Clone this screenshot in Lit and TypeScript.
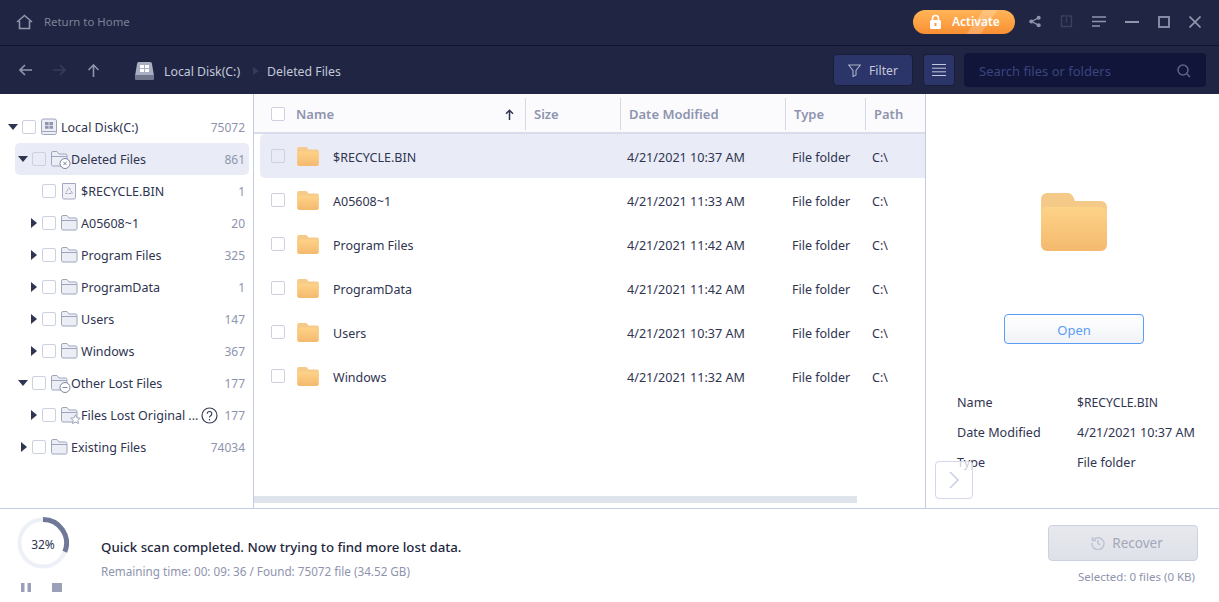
import { LitElement, html, css, svg } from "lit";
import { customElement } from "lit/decorators.js";

type TreeRow = {
  name: string;
  count: string;
  depth: number;
  arrow?: "down" | "right";
  icon: "disk" | "folder" | "bin" | "x" | "minus" | "star";
  selected?: boolean;
  help?: boolean;
};

const treeRows: TreeRow[] = [
  { name: "Local Disk(C:)", count: "75072", depth: 0, arrow: "down", icon: "disk" },
  { name: "Deleted Files", count: "861", depth: 1, arrow: "down", icon: "x", selected: true },
  { name: "$RECYCLE.BIN", count: "1", depth: 2, icon: "bin" },
  { name: "A05608~1", count: "20", depth: 2, arrow: "right", icon: "folder" },
  { name: "Program Files", count: "325", depth: 2, arrow: "right", icon: "folder" },
  { name: "ProgramData", count: "1", depth: 2, arrow: "right", icon: "folder" },
  { name: "Users", count: "147", depth: 2, arrow: "right", icon: "folder" },
  { name: "Windows", count: "367", depth: 2, arrow: "right", icon: "folder" },
  { name: "Other Lost Files", count: "177", depth: 1, arrow: "down", icon: "minus" },
  { name: "Files Lost Original ...", count: "177", depth: 2, arrow: "right", icon: "star", help: true },
  { name: "Existing Files", count: "74034", depth: 1, arrow: "right", icon: "folder" },
];

const files = [
  { name: "$RECYCLE.BIN", date: "4/21/2021 10:37 AM", selected: true },
  { name: "A05608~1", date: "4/21/2021 11:33 AM" },
  { name: "Program Files", date: "4/21/2021 11:42 AM" },
  { name: "ProgramData", date: "4/21/2021 11:42 AM" },
  { name: "Users", date: "4/21/2021 10:37 AM" },
  { name: "Windows", date: "4/21/2021 11:32 AM" },
];

const treeFolder = svg`<path d="M1.500 14.500V3a1.500 1.500 0 0 1 1.500-1.500h4l2 2.500h6.500a1.500 1.500 0 0 1 1.500 1.500v9a1.500 1.500 0 0 1-1.500 1.500H3a1.500 1.500 0 0 1-1.500-1.500Z" fill="#eceef6" stroke="#9ea5bd"/><path d="M1.500 6.500h15.500" stroke="#9ea5bd" fill="none"/>`;

function treeIcon(kind: TreeRow["icon"]) {
  if (kind === "disk") {
    return html`<svg width="18" height="18" viewBox="0 0 18 18">
      <rect x="1.500" y="1" width="15" height="15.500" rx="2" fill="#eceef6" stroke="#9ea5bd" />
      <path d="M1.500 13.500h15" stroke="#9ea5bd" />
      <path d="M5 4h3.600v3H5zM9.400 4H13v3H9.400zM5 7.800h3.600v3H5zM9.400 7.800H13v3H9.400z" fill="#8f96b0" />
    </svg>`;
  }
  if (kind === "bin") {
    return html`<svg width="18" height="18" viewBox="0 0 18 18">
      <path d="M2.500 1.500h13v14a1.500 1.500 0 0 1-1.500 1.500H4a1.500 1.500 0 0 1-1.500-1.500Z" fill="#f1f2f8" stroke="#a3a9c0" />
      <path d="M9 5.500l3.500 6h-7Z" fill="none" stroke="#a3a9c0" stroke-dasharray="3 1" />
    </svg>`;
  }
  if (kind === "folder") {
    return html`<svg width="19" height="18" viewBox="0 0 19 18">${treeFolder}</svg>`;
  }
  const badge =
    kind === "x"
      ? svg`<circle cx="15" cy="13.500" r="5" fill="#fff" stroke="#7d849f"/><path d="M13.300 11.800l3.400 3.400M16.700 11.800l-3.400 3.400" stroke="#7d849f"/>`
      : kind === "minus"
        ? svg`<circle cx="15" cy="13.500" r="5" fill="#fff" stroke="#7d849f"/><path d="M12.600 13.500h4.800" stroke="#7d849f"/>`
        : svg`<path d="M15.500 8.800l1.500 3 3.200.4-2.400 2.200.7 3.200-3-1.600-3 1.600.7-3.200-2.400-2.200 3.200-.4Z" fill="#fff" stroke="#9ea5bd"/>`;
  return html`<svg width="21" height="19" viewBox="0 0 21 19">${treeFolder}${badge}</svg>`;
}

const fileFolder = html`<svg width="22" height="19" viewBox="0 0 66 58">
  <path d="M0 6a6 6 0 0 1 6-6h20c4 0 6 2 8 8h26a6 6 0 0 1 6 6v14H0Z" fill="#f5c987" />
  <path d="M0 20a6 6 0 0 1 6-6h54a6 6 0 0 1 6 6v32a6 6 0 0 1-6 6H6a6 6 0 0 1-6-6Z" fill="url(#ff)" />
  <defs>
    <linearGradient id="ff" x1="0" y1="0" x2="0" y2="1">
      <stop offset="0" stop-color="#fdd388" />
      <stop offset="1" stop-color="#f4b96e" />
    </linearGradient>
  </defs>
</svg>`;

@customElement("app-root")
export class AppRoot extends LitElement {
  static styles = css`
    :host {
      display: flex;
      flex-direction: column;
      width: 1219px;
      height: 602px;
      overflow: hidden;
      background: #fff;
      font-family: "Noto Sans", sans-serif;
      font-size: 13px;
      color: #2b3048;
    }
    svg {
      display: block;
      flex: none;
    }
    .titlebar {
      display: flex;
      align-items: center;
      box-sizing: content-box;
      height: 43px;
      padding: 0 18px 2px 16px;
      background: #1f2542;
      border-bottom: 1px solid #11152b;
    }
    .home {
      font-size: 11.4px;
      color: #7d8298;
      margin-left: 11px;
    }
    .activate {
      position: relative;
      overflow: hidden;
      display: flex;
      align-items: center;
      gap: 10px;
      width: 102px;
      height: 24px;
      box-sizing: border-box;
      padding-left: 16px;
      margin-left: auto;
      border-radius: 12px;
      background: linear-gradient(#ffb558, #fb8f33);
      color: #fff;
      font-size: 12px;
      font-weight: 600;
    }
    .shine {
      position: absolute;
      left: 62px;
      top: 0;
      width: 14px;
      height: 24px;
      background: rgba(255, 255, 255, 0.22);
      transform: skewX(-35deg);
    }
    .winbtns {
      display: flex;
      align-items: center;
      margin-left: 14px;
      gap: 19px;
    }
    .toolbar {
      display: flex;
      align-items: center;
      height: 48px;
      padding: 0 13px 0 19px;
      background: #1f2542;
    }
    .nav {
      display: flex;
      gap: 21px;
    }
    .disk {
      margin: 2px 0 0 35px;
    }
    .crumb {
      color: #c3c8da;
      font-size: 12.3px;
      padding-top: 2px;
    }
    .crumb.first {
      margin-left: 10px;
    }
    .sep {
      width: 0;
      height: 0;
      margin: 2px 8px 0 13px;
      border-left: 6px solid #343b5c;
      border-top: 4.5px solid transparent;
      border-bottom: 4.5px solid transparent;
    }
    .filter,
    .listbtn {
      display: flex;
      align-items: center;
      justify-content: center;
      box-sizing: border-box;
      height: 32px;
      background: #2b3569;
      border: 1px solid #181d3a;
      border-radius: 4px;
      color: #c3c8da;
      font-size: 12.2px;
    }
    .filter {
      width: 80px;
      gap: 8px;
      margin-left: auto;
    }
    .listbtn {
      width: 32px;
      margin-left: 10px;
    }
    .search {
      display: flex;
      align-items: center;
      justify-content: space-between;
      box-sizing: border-box;
      width: 242px;
      height: 34px;
      margin-left: 9px;
      padding: 1px 15px 0;
      background: #11153a;
      border-radius: 4px;
      color: #39467e;
      font-size: 13px;
    }
    .main {
      display: flex;
      height: 414px;
      border-bottom: 1px solid #c5cbe3;
    }
    .tree {
      width: 254px;
      box-sizing: border-box;
      flex: none;
      padding: 17px 4px 0 0;
      border-right: 1px solid #c5cbe3;
    }
    .node {
      display: flex;
      align-items: center;
      height: 32px;
      font-size: 12.5px;
      color: #2f3450;
      white-space: nowrap;
    }
    .band {
      display: flex;
      align-items: center;
      flex: 1;
      height: 32px;
      padding-right: 4px;
    }
    .node.sel .band {
      background: #e9ecf6;
      border-radius: 5px;
    }
    .arrow {
      flex: none;
      width: 0;
      height: 0;
    }
    .arrow.down {
      margin-right: 4px;
      border-top: 6px solid #2f3450;
      border-left: 5px solid transparent;
      border-right: 5px solid transparent;
    }
    .arrow.right {
      margin: 0 5px 0 3px;
      border-left: 6px solid #2f3450;
      border-top: 5px solid transparent;
      border-bottom: 5px solid transparent;
    }
    .arrow.none {
      width: 14px;
    }
    .check {
      flex: none;
      box-sizing: border-box;
      width: 14px;
      height: 14px;
      background: #fff;
      border: 1px solid #cdd1df;
      border-radius: 2px;
    }
    .sel .check {
      background: transparent;
    }
    .icon {
      display: flex;
      flex: none;
      margin-left: 4px;
      width: 21px;
    }
    .help {
      flex: none;
      margin-left: auto;
    }
    .count {
      margin-left: auto;
      color: #8e94ae;
      font-size: 12px;
    }
    .help + .count {
      margin-left: 6px;
    }
    .list {
      position: relative;
      width: 672px;
      box-sizing: border-box;
      flex: none;
      border-right: 1px solid #c5cbe3;
    }
    .thead {
      display: grid;
      grid-template-columns: 271px 95px 165px 80px 1fr;
      height: 40px;
      box-sizing: border-box;
      background: #fbfbfe;
      border-bottom: 2px solid #d9dcea;
      color: #8e94ae;
      font-weight: 600;
      font-size: 13px;
    }
    .th {
      display: flex;
      align-items: center;
      height: 32px;
      margin-top: 4px;
      padding-left: 8px;
      border-left: 1px solid #d5d8e6;
    }
    .th.name {
      justify-content: space-between;
      padding: 0 11px 0 17px;
      border-left: 0;
    }
    .lead {
      display: flex;
      align-items: center;
      gap: 11px;
    }
    .row {
      display: grid;
      grid-template-columns: 367px 165px 80px 1fr;
      align-items: center;
      box-sizing: border-box;
      height: 44px;
      margin-left: 6px;
      font-size: 12.5px;
      color: #2f3450;
    }
    .row.sel {
      background: #e9ecf6;
      border-radius: 5px 0 0 5px;
    }
    .cell {
      padding-top: 2px;
    }
    .date {
      font-size: 12.6px;
    }
    .cell-name {
      display: flex;
      align-items: center;
      padding-left: 11px;
    }
    .folder {
      margin-left: 12px;
    }
    .fname {
      margin-left: 14px;
      padding-top: 2px;
    }
    .scroll {
      position: absolute;
      left: 0;
      top: 402px;
      width: 603px;
      height: 7px;
      background: #dfe3ec;
    }
    .detail {
      position: relative;
      flex: 1;
      display: flex;
      flex-direction: column;
      align-items: center;
      padding: 99px 0 0 3px;
    }
    .open-btn {
      width: 140px;
      height: 30px;
      box-sizing: border-box;
      margin-top: 63px;
      padding-top: 1px;
      display: flex;
      align-items: center;
      justify-content: center;
      border: 1px solid #5b9cf5;
      border-radius: 4px;
      background: linear-gradient(#fff, #f1f3f7);
      color: #5b9cf5;
      font-size: 13px;
    }
    .meta {
      align-self: stretch;
      display: grid;
      grid-template-columns: 120px 1fr;
      grid-auto-rows: 30px;
      align-items: center;
      margin: 43px 0 0 28px;
      font-size: 12.6px;
      color: #2f3450;
    }
    .caps {
      font-size: 12.2px;
    }
    .toggle {
      position: absolute;
      left: 9px;
      top: 367px;
      display: flex;
      align-items: center;
      justify-content: center;
      width: 38px;
      height: 38px;
      box-sizing: border-box;
      background: rgba(255, 255, 255, 0.75);
      border: 1px solid #d3d7ea;
      border-radius: 4px;
    }
    .footer {
      display: flex;
      flex: 1;
      align-items: flex-start;
    }
    .progress {
      width: 101px;
      flex: none;
      padding: 8px 0 0 17px;
      box-sizing: border-box;
    }
    .ring {
      position: relative;
      width: 52px;
      height: 52px;
    }
    .ring span {
      position: absolute;
      inset: 0;
      display: flex;
      align-items: center;
      justify-content: center;
      padding-top: 3px;
      font-size: 12px;
      color: #2f3450;
    }
    .controls {
      display: flex;
      gap: 21px;
      margin: 14px 0 0 4px;
    }
    .status {
      padding-top: 29px;
    }
    .big {
      font-size: 13.25px;
      font-weight: 500;
      color: #23273c;
    }
    .small {
      margin-top: 7px;
      font-size: 11.7px;
      color: #8e94ae;
    }
    .recover-wrap {
      margin-left: auto;
      display: flex;
      flex-direction: column;
      align-items: flex-end;
      padding: 16px 21px 0 0;
    }
    .recover {
      display: flex;
      align-items: center;
      justify-content: center;
      gap: 7px;
      box-sizing: border-box;
      width: 150px;
      height: 36px;
      padding-left: 8px;
      background: linear-gradient(#e8e9ee, #dfe1e9);
      border: 1px solid #ccd1e1;
      border-radius: 4px;
      color: #a3a7ba;
      font-size: 13.5px;
    }
    .selected {
      margin: 8px 3px 0 0;
      font-size: 11.5px;
      color: #8e94ae;
    }
  `;

  renderTitlebar() {
    return html`<div class="titlebar">
      <svg width="17" height="16" viewBox="0 0 17 16" fill="none" stroke="#9297ab" stroke-width="1.600">
        <path d="M1 8l7.500-6.500L16 8M3.500 7v7.500h10V7" />
      </svg>
      <span class="home">Return to Home</span>
      <div class="activate">
        <div class="shine"></div>
        <svg width="13" height="16" viewBox="0 0 13 16">
          <path d="M3.500 7V4.500a3 3 0 0 1 6 0V7" fill="none" stroke="#fff" stroke-width="1.700" />
          <rect x="1" y="6" width="11" height="9" rx="1.500" fill="#fff" />
          <rect x="5.500" y="9" width="2" height="3" fill="#fb9b3f" />
        </svg>
        <span>Activate</span>
      </div>
      <div class="winbtns">
        <svg width="12" height="13" viewBox="0 0 13 13" fill="#8f95ac">
          <circle cx="10.500" cy="2.500" r="2.200" /><circle cx="2.500" cy="6.500" r="2.200" /><circle cx="10.500" cy="10.500" r="2.200" />
          <path d="M2.500 6.500l8-4M2.500 6.500l8 4" stroke="#8f95ac" stroke-width="1.400" />
        </svg>
        <svg width="13" height="13" viewBox="0 0 13 13" fill="none" stroke="#3a415f" stroke-width="1.400">
          <path d="M4 1H1.500v10.500h10V1H9" /><path d="M6.500 2.500v5" /><path d="M4.500 1h4" />
        </svg>
        <svg width="14" height="11" viewBox="0 0 14 11" stroke="#8f95ac" stroke-width="1.600">
          <path d="M0 1h14M0 5.500h14M0 10h8" />
        </svg>
        <svg width="14" height="2" viewBox="0 0 14 2" stroke="#8f95ac" stroke-width="2"><path d="M0 1h14" /></svg>
        <svg width="12" height="12" viewBox="0 0 12 12" fill="none" stroke="#8f95ac" stroke-width="1.800"><rect x="1" y="1" width="10" height="10" /></svg>
        <svg width="12" height="12" viewBox="0 0 12 12" stroke="#8f95ac" stroke-width="1.700"><path d="M.5.5l11 11M11.500.5l-11 11" /></svg>
      </div>
    </div>`;
  }

  renderToolbar() {
    return html`<div class="toolbar">
      <div class="nav">
        <svg width="13" height="12" viewBox="0 0 13 12" fill="none" stroke="#8f95ac" stroke-width="1.600"><path d="M13 6H1.500M6 1L1 6l5 5" /></svg>
        <svg width="13" height="12" viewBox="0 0 13 12" fill="none" stroke="#343b5c" stroke-width="1.600"><path d="M0 6h11.500M7 1l5 5-5 5" /></svg>
        <svg width="13" height="13" viewBox="0 0 13 13" fill="none" stroke="#8f95ac" stroke-width="1.600"><path d="M6.500 13V1.500M1.500 6l5-5 5 5" /></svg>
      </div>
      <svg class="disk" width="19" height="18" viewBox="0 0 19 18">
        <path d="M2 2a2 2 0 0 1 2-2h11a2 2 0 0 1 2 2l2 12H0Z" fill="#a9aec2" />
        <rect y="13" width="19" height="5" rx="1" fill="#71778f" />
        <path d="M5 3h4v3H5zM10 3h4v3h-4zM5 7h4v3H5zM10 7h4v3h-4z" fill="#fff" />
      </svg>
      <span class="crumb first">Local Disk(C:)</span>
      <span class="sep"></span>
      <span class="crumb">Deleted Files</span>
      <div class="filter">
        <svg width="13" height="13" viewBox="0 0 13 13" fill="none" stroke="#aab0c8" stroke-width="1.100"><path d="M.7 1h11.600L8 6.500V11l-3 1.500v-6Z" /></svg>
        <span>Filter</span>
      </div>
      <div class="listbtn">
        <svg width="14" height="12" viewBox="0 0 14 12" stroke="#c3c8da" stroke-width="1"><path d="M0 .5h14M0 4.200h14M0 7.800h14M0 11.500h14" /></svg>
      </div>
      <div class="search">
        <span>Search files or folders</span>
        <svg width="14" height="14" viewBox="0 0 14 14" fill="none" stroke="#5e6584" stroke-width="1.500"><circle cx="6" cy="6" r="5" /><path d="M9.800 9.800L13 13" /></svg>
      </div>
    </div>`;
  }

  renderNode(n: TreeRow) {
    const pad = 8 + n.depth * 10;
    const arrow = n.arrow ?? "none";
    return html`<div class="node ${n.selected ? "sel" : ""}">
      <div class="band" style="padding-left:${n.selected ? 3 : pad}px;margin-left:${n.selected ? pad - 3 : 0}px">
        <span class="arrow ${arrow}"></span>
        <span class="check"></span>
        <span class="icon">${treeIcon(n.icon)}</span>
        <span>${n.name}</span>
        ${n.help
          ? html`<svg class="help" width="17" height="17" viewBox="0 0 17 17" fill="none" stroke="#3a3f58" stroke-width="1.200">
              <circle cx="8.500" cy="8.500" r="7.500" />
              <path d="M6.200 6.800a2.300 2.300 0 1 1 3.500 2c-.8.500-1.200.9-1.200 1.800" />
              <path d="M8.500 12v1.400" />
            </svg>`
          : ""}
        <span class="count">${n.count}</span>
      </div>
    </div>`;
  }

  render() {
    return html`
      ${this.renderTitlebar()} ${this.renderToolbar()}
      <div class="main">
        <div class="tree">${treeRows.map((n) => this.renderNode(n))}</div>
        <div class="list">
          <div class="thead">
            <div class="th name">
              <span class="lead"><span class="check"></span>Name</span>
              <svg width="9" height="11" viewBox="0 0 9 11" fill="none" stroke="#2f3450" stroke-width="1.500"><path d="M4.500 11V1.500M1 4.800l3.500-3.500L8 4.800" /></svg>
            </div>
            <div class="th">Size</div>
            <div class="th">Date Modified</div>
            <div class="th">Type</div>
            <div class="th">Path</div>
          </div>
          ${files.map(
            (f) => html`<div class="row ${f.selected ? "sel" : ""}">
              <div class="cell-name">
                <span class="check"></span>
                <span class="folder">${fileFolder}</span>
                <span class="fname">${f.name}</span>
              </div>
              <div class="cell date">${f.date}</div>
              <div class="cell">File folder</div>
              <div class="cell">C:\\</div>
            </div>`,
          )}
          <div class="scroll"></div>
        </div>
        <div class="detail">
          <svg width="66" height="58" viewBox="0 0 66 58">
            <path d="M0 6a6 6 0 0 1 6-6h20c4 0 6 2 8 8h26a6 6 0 0 1 6 6v14H0Z" fill="#f5c987" />
            <path d="M0 20a6 6 0 0 1 6-6h54a6 6 0 0 1 6 6v32a6 6 0 0 1-6 6H6a6 6 0 0 1-6-6Z" fill="url(#bf)" />
            <defs>
              <linearGradient id="bf" x1="0" y1="0" x2="0" y2="1">
                <stop offset="0" stop-color="#fdd388" />
                <stop offset="1" stop-color="#f4b96e" />
              </linearGradient>
            </defs>
          </svg>
          <div class="open-btn">Open</div>
          <div class="meta">
            <span>Name</span><span class="caps">$RECYCLE.BIN</span>
            <span>Date Modified</span><span>4/21/2021 10:37 AM</span>
            <span>Type</span><span>File folder</span>
          </div>
          <div class="toggle">
            <svg width="10" height="18" viewBox="0 0 10 18" fill="none" stroke="#c8cde2" stroke-width="1.500"><path d="M1 1l8 8-8 8" /></svg>
          </div>
        </div>
      </div>
      <div class="footer">
        <div class="progress">
          <div class="ring">
            <svg width="52" height="52" viewBox="0 0 52 52" fill="none">
              <circle cx="26" cy="26" r="23.500" stroke="#eef0f8" stroke-width="4" />
              <path d="M26 2.500A23.500 23.500 0 0 1 47.800 34.800" stroke="#6f7897" stroke-width="5" />
            </svg>
            <span>32%</span>
          </div>
          <div class="controls">
            <svg width="10" height="9" viewBox="0 0 10 9" fill="#9aa0b8"><rect width="3.500" height="9" /><rect x="6.500" width="3.500" height="9" /></svg>
            <svg width="10" height="9" viewBox="0 0 10 9" fill="#9aa0b8"><rect width="10" height="9" /></svg>
          </div>
        </div>
        <div class="status">
          <div class="big">Quick scan completed. Now trying to find more lost data.</div>
          <div class="small">Remaining time: 00: 09: 36 / Found: 75072 file (34.52 GB)</div>
        </div>
        <div class="recover-wrap">
          <div class="recover">
            <svg width="14" height="14" viewBox="0 0 14 14" fill="none" stroke="#bfc4d4" stroke-width="1.500">
              <path d="M2.200 4A6 6 0 1 1 1 7" /><path d="M1.500 1v3.500H5" /><path d="M7 4v3.500l2.200 1.300" />
            </svg>
            <span>Recover</span>
          </div>
          <div class="selected">Selected: 0 files (0 KB)</div>
        </div>
      </div>
    `;
  }
}
